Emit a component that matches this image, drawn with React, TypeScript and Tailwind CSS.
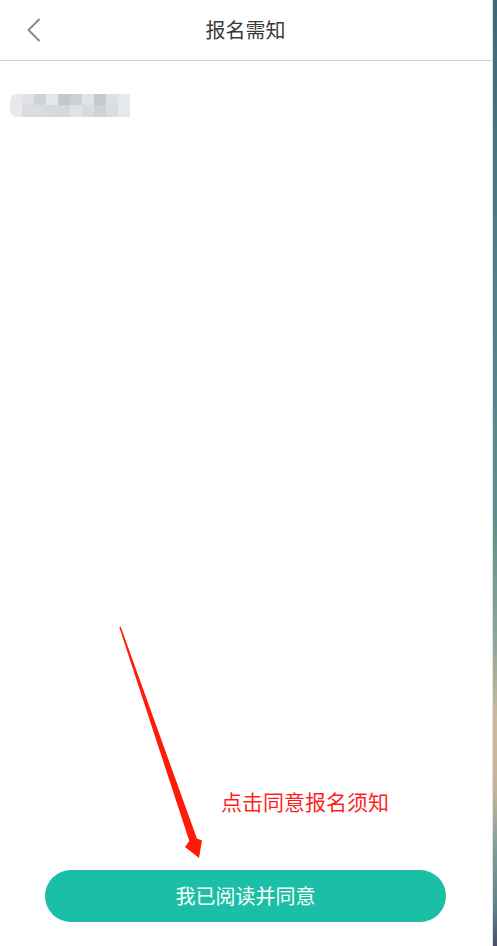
import React from "react";

const blurTop = ["#dfe1e4", "#cfd2d6", "#e4e6e8", "#c3c7ce", "#cdd1d4", "#e2e3e5", "#c5c9cc", "#dde0e3", "#e6e8ea"];
const blurBottom = ["#dadde0", "#dadde0", "#d7dadd", "#d4d8dc", "#e0e2e4", "#d8dbdf", "#cfd3d6", "#d9dde0", "#e8e9ea"];

function BlurredLine() {
  return (
    <div className="ml-[10px] mt-[33px] flex h-[23px] w-[120px] overflow-hidden rounded-l-[7px]">
      <div className="w-[12px] bg-[#e8e9eb]" />
      <div className="flex flex-1 flex-col">
        <div className="flex h-[11px]">
          {blurTop.map((c, i) => (
            <div key={i} className="h-full flex-1" style={{ backgroundColor: c }} />
          ))}
        </div>
        <div className="flex h-[12px]">
          {blurBottom.map((c, i) => (
            <div key={i} className="h-full flex-1" style={{ backgroundColor: c }} />
          ))}
        </div>
      </div>
    </div>
  );
}

export default function App() {
  return (
    <div className="flex h-[946px] w-[497px] overflow-hidden bg-white font-['Noto_Sans_CJK_SC','Noto_Sans',sans-serif]">
      <div className="relative flex w-[493px] flex-col border-r border-[#e2e2e2] bg-white">
        {/* Header */}
        <header className="grid h-[61px] grid-cols-[60px_1fr_60px] items-center border-b border-[#cfcfcf] pr-[1px]">
          <button className="flex h-full items-center pl-[27px]">
            <svg width="14" height="24" viewBox="0 0 14 24" fill="none">
              <path d="M12 1.5 L1.5 12 L12 22.5" stroke="#8a8a8a" strokeWidth="2" strokeLinecap="round" strokeLinejoin="round" />
            </svg>
          </button>
          <h1 className="text-center text-[20px] leading-none text-[#3a3a3a]">报名需知</h1>
          <div />
        </header>

        <BlurredLine />

        <div className="flex-1" />

        {/* Annotation */}
        <div className="pl-[221px] text-[21px] leading-[28px] text-[#ff1f1f]">点击同意报名须知</div>

        <div className="mx-[45px] mb-[24px] mt-[55px] flex h-[52px] w-[401px] items-center justify-center rounded-full bg-[#1bbfa5] text-[20px] text-white">
          我已阅读并同意
        </div>

        <svg className="pointer-events-none absolute inset-0" width="493" height="946" viewBox="0 0 493 946">
          <polygon
            points="119.3,627.2 120.7,626.8 196.9,838.5 202,840.5 199,858 185,847 189.3,841.1"
            fill="#ff1a0a"
          />
        </svg>
      </div>
      <div className="flex-1 bg-[linear-gradient(to_bottom,#3d6878_0%,#4a7d86_25%,#5d908d_55%,#8fa699_68%,#cdbb9c_76%,#c2b497_84%,#7c9b9b_90%,#5f8286_96%,#4a5068_100%)]" />
    </div>
  );
}
